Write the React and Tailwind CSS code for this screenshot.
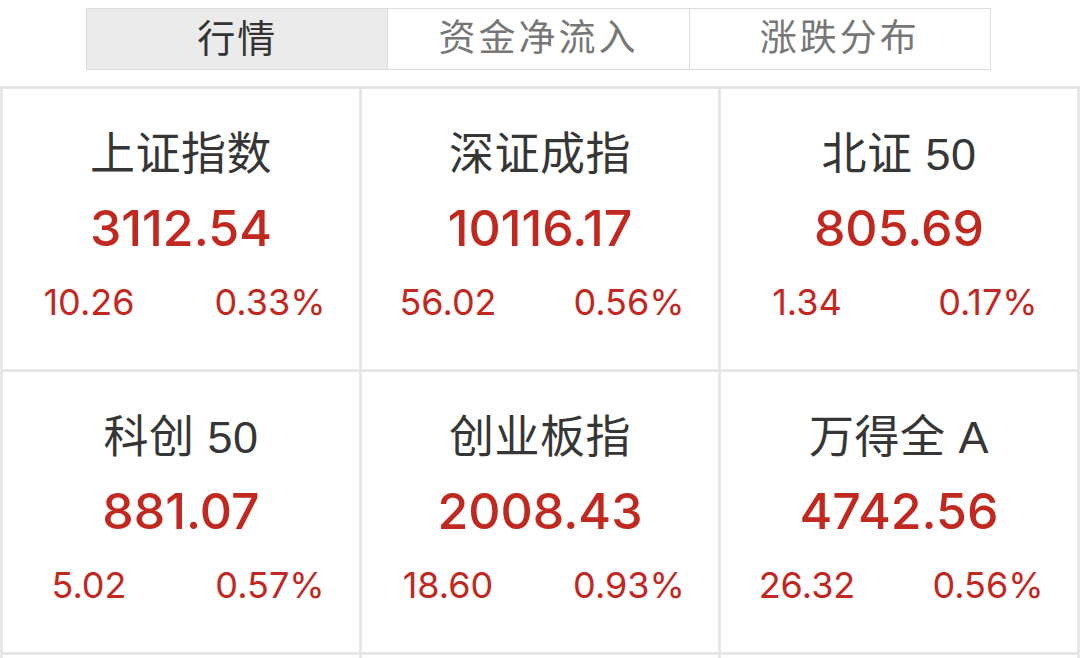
import React from "react";

const data = [
  { name: "上证指数", value: "3112.54", chg: "10.26", pct: "0.33%" },
  { name: "深证成指", value: "10116.17", chg: "56.02", pct: "0.56%" },
  { name: "北证 50", value: "805.69", chg: "1.34", pct: "0.17%" },
  { name: "科创 50", value: "881.07", chg: "5.02", pct: "0.57%" },
  { name: "创业板指", value: "2008.43", chg: "18.60", pct: "0.93%" },
  { name: "万得全 A", value: "4742.56", chg: "26.32", pct: "0.56%" },
];

const cjk = { fontFamily: '"Liberation Sans", "Noto Sans CJK SC", sans-serif' };
const num = { fontFamily: 'Inter, "Liberation Sans", sans-serif' };

function Cell({ d }) {
  return (
    <div className="bg-white h-[280px] flex flex-col items-center pt-[42px]" style={cjk}>
      <div className="h-[48px] leading-[48px] text-[45px] text-[#363636] tracking-[0.5px] whitespace-pre">{d.name}</div>
      <div className="mt-[21px] h-[56px] leading-[56px] text-[50px] font-medium text-[#c1281f]" style={num}>{d.value}</div>
      <div className="mt-[26px] h-[40px] leading-[40px] w-full grid grid-cols-2 text-[36px] text-[#c1281f]" style={num}>
        <div className="text-center pr-[6px]">{d.chg}</div>
        <div className="text-center">{d.pct}</div>
      </div>
    </div>
  );
}

export default function App() {
  return (
    <div className="w-[1080px] h-[658px] overflow-hidden bg-white" style={cjk}>
      <div className="pt-[8px] pl-[86px]">
        <div className="w-[905px] h-[62px] flex border-[1.5px] border-[#dddddd]">
          <div className="flex-1 bg-[#ebebeb] flex items-center justify-center text-[38px] text-[#333333] tracking-[2px]">行情</div>
          <div className="flex-1 border-l-[1.5px] border-[#dddddd] flex items-center justify-center text-[37px] text-[#777777] tracking-[3px]">资金净流入</div>
          <div className="flex-1 border-l-[1.5px] border-[#dddddd] flex items-center justify-center text-[37px] text-[#777777] tracking-[3px]">涨跌分布</div>
        </div>
      </div>
      <div className="mt-[16px] bg-[#e6e6e6] p-[3px] grid grid-cols-3 gap-[3px]">
        {data.map((d) => (
          <Cell key={d.name} d={d} />
        ))}
        <div className="bg-white h-[280px]" />
        <div className="bg-white h-[280px]" />
        <div className="bg-white h-[280px]" />
      </div>
    </div>
  );
}
